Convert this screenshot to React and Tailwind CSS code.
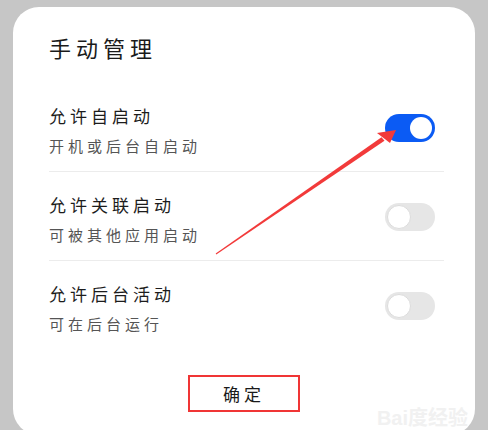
import React from "react";

const font = { fontFamily: '"Noto Sans CJK SC", "Noto Sans", sans-serif' };

function Toggle({ on }) {
  return on ? (
    <div className="mr-[9px] flex h-[28px] w-[50px] shrink-0 items-center justify-end rounded-full bg-[#0b5bf4] pr-[3px]">
      <div className="h-[22px] w-[22px] rounded-full bg-white" />
    </div>
  ) : (
    <div className="mr-[9px] flex h-[28px] w-[50px] shrink-0 items-center rounded-full bg-[#e6e6e6] pl-[2px]">
      <div className="h-[24px] w-[24px] rounded-full border border-[#dcdcdc] bg-white" />
    </div>
  );
}

function Row({ title, sub, on, last }) {
  return (
    <div className={"flex items-center justify-between pt-[21px] pb-[15px] " + (last ? "" : "border-b border-[#ececec]")}>
      <div className="flex flex-col gap-[8px]">
        <div className="text-[17px] leading-[24px] tracking-[4px] text-[#1c1c1c]">{title}</div>
        <div className="text-[15px] leading-[20px] tracking-[4px] text-[#555]">{sub}</div>
      </div>
      <div className="-mt-[5px]">
        <Toggle on={on} />
      </div>
    </div>
  );
}

export default function App() {
  return (
    <div className="relative h-[430px] w-[488px] overflow-hidden bg-[#c6c6c6] px-[13px] pt-[7px]" style={font}>
      <div className="h-[428px] rounded-[26px] bg-white pl-[36px] pr-[31px] pt-[25px]">
        <div className="mb-[21px] text-[22px] leading-[30px] tracking-[5px] text-[#1a1a1a]">手动管理</div>
        <Row title="允许自启动" sub="开机或后台自启动" on />
        <Row title="允许关联启动" sub="可被其他应用启动" />
        <Row title="允许后台活动" sub="可在后台运行" last />
        <div className="mt-[26px] flex justify-center">
          <div className="-ml-[5px] flex h-[37px] w-[112px] items-center justify-center border-2 border-[#f03535] text-[17px] tracking-[4px] text-[#1a1a1a]">
            确定
          </div>
        </div>
      </div>

      {/* annotation arrow */}
      <svg className="pointer-events-none absolute left-0 top-0" width="488" height="430" viewBox="0 0 488 430">
        <polygon points="215.7,253.6 216.3,254.4 384.5,140.8 381.5,137.2" fill="#f23a3a" />
        <polygon points="396,130 377,133 390,143" fill="#f23a3a" />
      </svg>

      <div className="pointer-events-none absolute bottom-[0px] right-[20px] text-[20px] leading-[24px] font-bold text-[#f1f1f1]" style={{ fontFamily: '"Liberation Sans", sans-serif' }}>
        Bai<span style={font}>度经验</span>
      </div>
    </div>
  );
}
